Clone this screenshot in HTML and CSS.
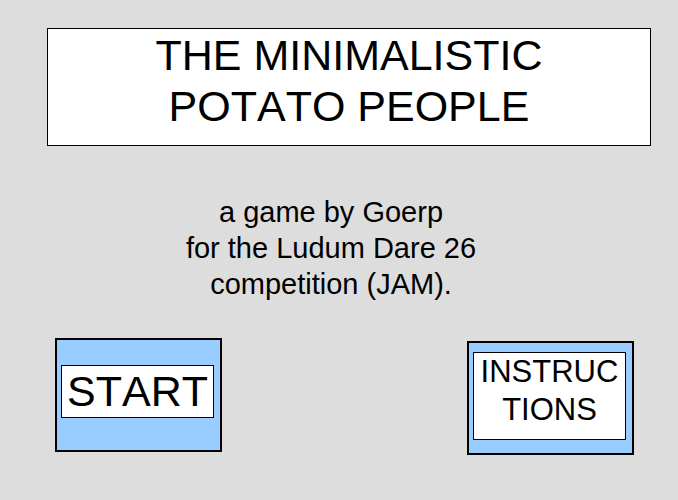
FILE: index.html
```html
<!DOCTYPE html>
<html lang="en">
<head>
  <meta charset="UTF-8">
  <title>The Minimalistic Potato People</title>
  <link rel="stylesheet" href="styles.css">
</head>
<body>

  <header>
    <h1>THE MINIMALISTIC<br>POTATO PEOPLE</h1>
  </header>

  <main>
    <p class="credits">a game by Goerp<br>for the Ludum Dare 26<br>competition (JAM).</p>
  </main>

  <!-- MENU -->
  <nav class="menu">
    <button type="button" class="start"><span>START</span></button>
    <button type="button" class="instructions"><span>INSTRUC<wbr>TIONS</span></button>
  </nav>

</body>
</html>
```

FILE: styles.css
```css
* {
  box-sizing: border-box;
}

body {
  margin: 0;
  padding: 28px 27px 0 47px;
  font-family: "Liberation Sans", Arial, sans-serif;
  font-kerning: none;
  background: #dddddd;
  color: #000;
}

header {
  padding: 1px 0 13px;
  background: white;
  border: 1px solid #000;
  text-align: center;
}

h1 {
  margin: 0;
  font-size: 43px;
  font-weight: normal;
  line-height: 51px;
}

.credits {
  margin: 48px 36px 0 0;
  font-size: 29px;
  line-height: 36px;
  text-align: center;
}

/* Menu buttons */
.menu {
  display: flex;
  justify-content: space-between;
  align-items: flex-start;
  padding: 36px 17px 0 8px;
}

button {
  display: flex;
  justify-content: center;
  align-items: flex-start;
  width: 167px;
  height: 114px;
  padding: 9px 6px 0 4px;
  font-family: inherit;
  font-kerning: none;
  color: #000;
  background: #99ccff;
  border: 2px solid #000;
  cursor: pointer;
}

button span {
  width: 100%;
  background: white;
  border: 1px solid #000;
}

.start {
  padding-top: 25px;
  font-size: 43px;
  line-height: 51px;
}

.instructions {
  margin-top: 3px;
  font-size: 31px;
  line-height: 38px;
}

.instructions span {
  padding-bottom: 10px;
}
```
